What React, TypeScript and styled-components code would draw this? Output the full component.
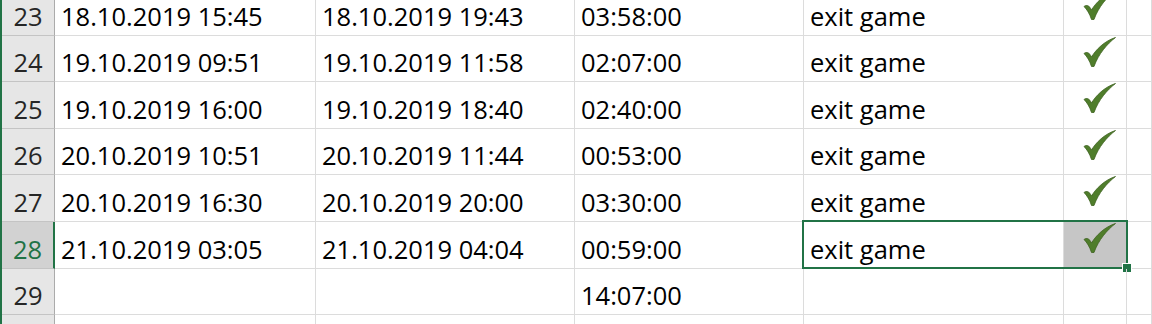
import styled, { createGlobalStyle } from 'styled-components';

const GREEN = '#217346';
const GRID = '#dcdcdc';

const GlobalStyle = createGlobalStyle`
	html, body {
		margin: 0;
		padding: 0;
		background: #ffffff;
		overflow: hidden;
	}
	body {
		font-family: 'Open Sans', 'Liberation Sans', sans-serif;
	}
`;

type Entry = {
	num?: number;
	height: number;
	start?: string;
	end?: string;
	duration?: string;
	reason?: string;
	done?: boolean;
	active?: boolean;
};

// row 30 only peeks in at the bottom edge, its label is still below the fold
const rows: Entry[] = [
	{ num: 23, height: 47, start: '18.10.2019 15:45', end: '18.10.2019 19:43', duration: '03:58:00', reason: 'exit game', done: true },
	{ num: 24, height: 46, start: '19.10.2019 09:51', end: '19.10.2019 11:58', duration: '02:07:00', reason: 'exit game', done: true },
	{ num: 25, height: 47, start: '19.10.2019 16:00', end: '19.10.2019 18:40', duration: '02:40:00', reason: 'exit game', done: true },
	{ num: 26, height: 46, start: '20.10.2019 10:51', end: '20.10.2019 11:44', duration: '00:53:00', reason: 'exit game', done: true },
	{ num: 27, height: 47, start: '20.10.2019 16:30', end: '20.10.2019 20:00', duration: '03:30:00', reason: 'exit game', done: true },
	{ num: 28, height: 47, start: '21.10.2019 03:05', end: '21.10.2019 04:04', duration: '00:59:00', reason: 'exit game', done: true, active: true },
	{ num: 29, height: 46, duration: '14:07:00' },
	{ height: 20 },
];

const CheckMark = () => (
	<svg width="33" height="30" viewBox="0 0 33 30">
		<path
			d="M1 16.5 C3.5 14.5 6.5 15.5 8.5 20 C13 12.5 21.5 4 32.5 0.5 C24 7 15.5 17 11 29.5 L8.5 29.5 C6.5 23.5 4 19.5 1 16.5 Z"
			fill="#4f7d2b"
			stroke="#3d6220"
			strokeWidth="0.8"
			strokeLinejoin="round"
		/>
	</svg>
);

export default function App() {
	return (
		<>
			<GlobalStyle />
			<Sheet>
				{rows.map((row, i) => (
					<Row key={i} $height={row.height}>
						<RowHeader $active={row.active}>{row.num}</RowHeader>
						<Cell>{row.start}</Cell>
						<Cell>{row.end}</Cell>
						<Cell>{row.duration}</Cell>
						<Cell>{row.reason}</Cell>
						<CheckCell $selected={row.active}>{row.done && <CheckMark />}</CheckCell>
						<Cell />
						{row.active && (
							<Selection>
								<FillHandle />
							</Selection>
						)}
					</Row>
				))}
			</Sheet>
		</>
	);
}

const Sheet = styled.div`
	display: flex;
	flex-direction: column;
	width: 1152px;
	height: 335px;
	margin-top: -11px;
	border-left: 2px solid ${GREEN};
	box-sizing: border-box;
	overflow: hidden;
`;

const Row = styled.div<{ $height: number }>`
	position: relative;
	display: grid;
	grid-template-columns: 53px 261px 259px 229px 260px 63px 1fr;
	height: ${(p) => p.$height}px;
	flex-shrink: 0;
`;

const RowHeader = styled.div<{ $active?: boolean }>`
	display: flex;
	align-items: flex-end;
	justify-content: center;
	padding-bottom: 6px;
	box-sizing: border-box;
	background: ${(p) => (p.$active ? '#d2d2d2' : '#e6e6e6')};
	color: ${(p) => (p.$active ? GREEN : '#262626')};
	border-bottom: 1px solid #c4c4c4;
	border-right: ${(p) => (p.$active ? `2px solid ${GREEN}` : '1px solid #ababab')};
	font-size: 25.5px;
	line-height: 1;
`;

const Cell = styled.div`
	display: flex;
	align-items: flex-end;
	padding: 0 0 6px 6px;
	box-sizing: border-box;
	border-right: 1px solid ${GRID};
	border-bottom: 1px solid ${GRID};
	color: #000000;
	font-size: 25.5px;
	line-height: 1;
	white-space: nowrap;
	overflow: hidden;
`;

const CheckCell = styled.div<{ $selected?: boolean }>`
	display: flex;
	align-items: flex-start;
	padding: 1px 0 0 19px;
	box-sizing: border-box;
	background: ${(p) => (p.$selected ? '#c6c6c6' : 'transparent')};
	border-right: 1px solid ${GRID};
	border-bottom: 1px solid ${GRID};
`;

const Selection = styled.div`
	position: absolute;
	left: 800px;
	top: -2px;
	width: 326px;
	height: 49px;
	border: 2px solid ${GREEN};
	box-sizing: border-box;
	pointer-events: none;
`;

const FillHandle = styled.div`
	position: absolute;
	right: -5px;
	bottom: -5px;
	width: 8px;
	height: 8px;
	background: ${GREEN};
	border: 1px solid #ffffff;
	box-sizing: content-box;
	margin: -1px;
`;
